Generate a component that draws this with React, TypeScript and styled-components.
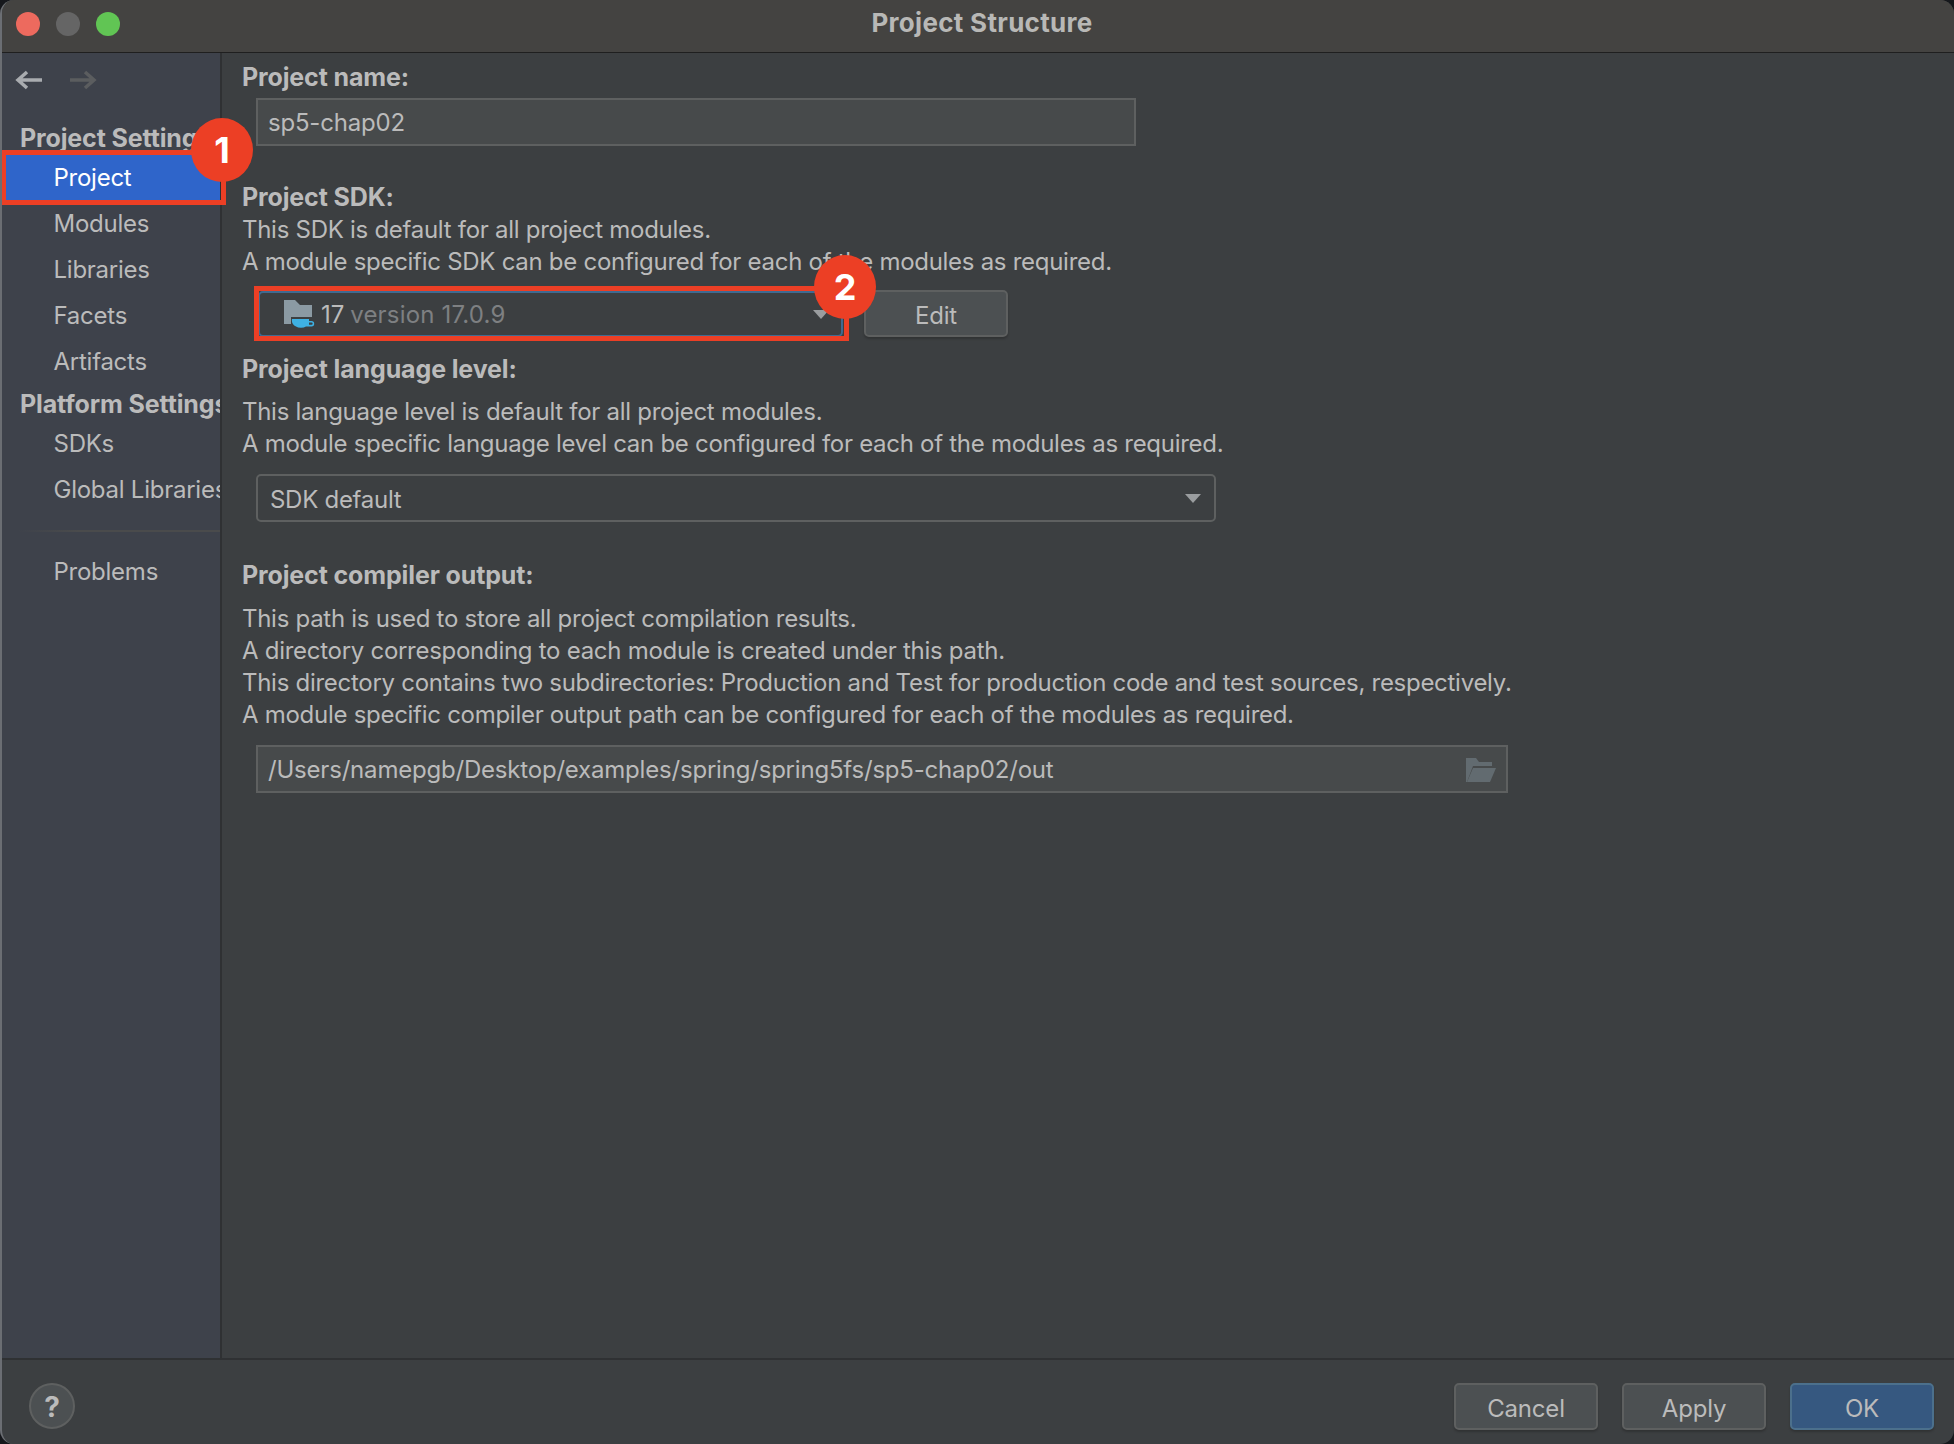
import React from "react";
import styled, { createGlobalStyle } from "styled-components";

const GlobalStyle = createGlobalStyle`
  html, body {
    margin: 0;
    padding: 0;
    background: #16181c;
  }
  body {
    font-family: Inter, "Liberation Sans", sans-serif;
    font-size: 24px;
    color: #bbbbbb;
  }
`;

const Window = styled.div`
  width: 1954px;
  height: 1444px;
  box-sizing: border-box;
  display: flex;
  flex-direction: column;
  background: #3c3f41;
  border-left: 2px solid #6b6e73;
  border-radius: 14px;
  overflow: hidden;
`;

const TitleBar = styled.div`
  position: relative;
  box-sizing: border-box;
  height: 53px;
  flex: none;
  display: flex;
  justify-content: center;
  padding-top: 7px;
  background: #444341;
  border-bottom: 1px solid #1f1f1f;
`;

const Lights = styled.div`
  position: absolute;
  left: 14px;
  top: 12px;
  display: flex;
  gap: 16px;
`;

const Light = styled.span<{ $color: string }>`
  width: 24px;
  height: 24px;
  border-radius: 50%;
  background: ${({ $color }) => $color};
`;

const Title = styled.div`
  font-size: 26px;
  line-height: 32px;
  font-weight: 700;
  color: #b8b8b6;
  letter-spacing: 0.3px;
  margin-left: 8px;
`;

const Main = styled.div`
  flex: 1;
  display: flex;
  min-height: 0;
`;

const Sidebar = styled.div`
  width: 218px;
  flex: none;
  display: flex;
  flex-direction: column;
  background: #3e424b;
  border-right: 2px solid #2f3133;
`;

const NavBar = styled.div`
  height: 54px;
  display: flex;
  align-items: center;
  gap: 26px;
  padding-left: 13px;
  margin-bottom: 14px;
`;

const SectionTitle = styled.div<{ $gap?: number }>`
  height: 32px;
  line-height: 34px;
  margin-top: ${({ $gap }) => $gap ?? 0}px;
  margin-bottom: 1px;
  padding-left: 18px;
  font-size: 25px;
  font-weight: 700;
  letter-spacing: -0.13px;
  white-space: nowrap;
  overflow: hidden;
`;

const NavItem = styled.div<{ $active?: boolean }>`
  position: relative;
  height: 46px;
  line-height: 48px;
  padding-left: 51.5px;
  letter-spacing: -0.25px;
  white-space: nowrap;
  color: ${({ $active }) => ($active ? "#ffffff" : "#bbbbbb")};
  background: ${({ $active }) => ($active ? "#2f65ca" : "transparent")};
`;

const ClippedLabel = styled.span`
  display: block;
  overflow: hidden;
`;

const SideRule = styled.div`
  height: 2px;
  margin: 18px 0 16px 16px;
  background: linear-gradient(90deg, #3e424b, #4a4b4c 30%, #4a4b4c);
`;

const Highlight = styled.div<{ $inset: string }>`
  position: absolute;
  inset: ${({ $inset }) => $inset};
  border: 5px solid #ec3f25;
  z-index: 2;
  pointer-events: none;
`;

const Badge = styled.div<{ $top: number; $left?: number; $right?: number }>`
  position: absolute;
  top: ${({ $top }) => $top}px;
  left: ${({ $left }) => ($left === undefined ? "auto" : `${$left}px`)};
  right: ${({ $right }) => ($right === undefined ? "auto" : `${$right}px`)};
  width: 62px;
  height: 64px;
  border-radius: 50%;
  background: #ec3f25;
  color: #ffffff;
  display: flex;
  align-items: center;
  justify-content: center;
  font-size: 36px;
  font-weight: 700;
  line-height: 1;
  z-index: 3;
`;

const Content = styled.div`
  flex: 1;
  padding: 8px 20px 0 20px;
  min-width: 0;
`;

const Label = styled.div<{ $gap?: number }>`
  height: 32px;
  line-height: 33px;
  margin-top: ${({ $gap }) => $gap ?? 0}px;
  font-size: 25px;
  font-weight: 700;
  letter-spacing: -0.13px;
`;

const Description = styled.div<{ $gap?: number }>`
  height: 32px;
  margin-top: ${({ $gap }) => $gap ?? 0}px;
  line-height: 34px;
  letter-spacing: -0.28px;
  white-space: nowrap;
`;

const TextField = styled.div<{ $width: number; $gap: number }>`
  box-sizing: border-box;
  width: ${({ $width }) => $width}px;
  height: 48px;
  margin: ${({ $gap }) => $gap}px 0 0 14px;
  padding: 1px 10px 0;
  display: flex;
  align-items: center;
  justify-content: space-between;
  background: #474a4b;
  border: 2px solid #5e6060;
  letter-spacing: -0.2px;
`;

const ComboRow = styled.div`
  display: flex;
  align-items: center;
  gap: 21px;
  height: 47px;
  margin: 13px 0 0 16px;
`;

const SdkCombo = styled.div`
  position: relative;
  box-sizing: border-box;
  width: 585px;
  height: 46px;
  display: flex;
  align-items: center;
  padding-left: 23px;
  border: 2px solid #3f6a91;
  border-radius: 5px;
`;

const SdkName = styled.span`
  margin-left: 6px;
  padding-top: 2px;
  letter-spacing: -0.1px;
`;

const SdkVersion = styled.span`
  margin-left: 6px;
  padding-top: 2px;
  color: #7e8082;
  letter-spacing: 0.2px;
`;

const Caret = styled.span<{ $right: number }>`
  position: absolute;
  right: ${({ $right }) => $right}px;
  top: 50%;
  margin-top: -4px;
  width: 0;
  height: 0;
  border-left: 8px solid transparent;
  border-right: 8px solid transparent;
  border-top: 9px solid #9a9d9f;
`;

const Button = styled.div<{ $primary?: boolean }>`
  box-sizing: border-box;
  width: 144px;
  height: 47px;
  padding-top: 3px;
  display: flex;
  align-items: center;
  justify-content: center;
  border-radius: 5px;
  letter-spacing: -0.2px;
  background: ${({ $primary }) => ($primary ? "#365880" : "#4c5052")};
  border: 2px solid ${({ $primary }) => ($primary ? "#4c708c" : "#5e6060")};
  box-shadow: 0 2px 2px rgba(30, 30, 30, 0.35);
`;

const LevelCombo = styled.div`
  position: relative;
  box-sizing: border-box;
  width: 960px;
  height: 48px;
  margin: 15px 0 0 14px;
  padding: 2px 0 0 12px;
  display: flex;
  align-items: center;
  border: 2px solid #5e6060;
  border-radius: 5px;
  letter-spacing: -0.28px;
`;

const Footer = styled.div`
  flex: none;
  box-sizing: content-box;
  display: flex;
  align-items: flex-start;
  justify-content: space-between;
  padding: 23px 20px 0 27px;
  height: 61px;
  border-top: 2px solid #2f3133;
`;

const HelpButton = styled.div`
  box-sizing: border-box;
  width: 46px;
  height: 46px;
  padding-top: 2px;
  display: flex;
  align-items: center;
  justify-content: center;
  border-radius: 50%;
  background: #4c5052;
  border: 2px solid #5e6060;
  font-size: 28px;
  font-weight: 700;
`;

const FooterActions = styled.div`
  display: flex;
  gap: 24px;
`;

const BackIcon = ({ muted }: { muted?: boolean }) => (
  <svg width="28" height="22" viewBox="0 0 28 22" fill="none">
    <path
      d={muted ? "M1 11H25M16 3l9 8-9 8" : "M27 11H3M12 3l-9 8 9 8"}
      stroke={muted ? "#5b5d5f" : "#a9acb0"}
      strokeWidth="3.500"
    />
  </svg>
);

const JdkFolderIcon = () => (
  <svg width="32" height="30" viewBox="0 0 32 30">
    <path d="M1 1h11l5 5h12v19H1z" fill="#8b9aa3" />
    <path d="M8 18h23v12H8z" fill="#3c3f41" />
    <path d="M9 20h17v2h2.500a2.700 2.700 0 0 1 0 5.400H23a6 2.800 0 0 1-10 0 7 7 0 0 1-4-7.400zM26 23.500v2.300h2.500a1.100 1.100 0 0 0 0-2.300z" fill="#3eb1e3" />
  </svg>
);

const OpenFolderIcon = () => (
  <svg width="30" height="24" viewBox="0 0 30 24">
    <path d="M0 0h10l3 4h13v4H7L1 24H0z" fill="#626b70" />
    <path d="M7 10h23l-6 14H1z" fill="#626b70" />
  </svg>
);

export default function App() {
  return (
    <>
      <GlobalStyle />
      <Window>
        <TitleBar>
          <Lights>
            <Light $color="#ed6a5e" />
            <Light $color="#656565" />
            <Light $color="#61c554" />
          </Lights>
          <Title>Project Structure</Title>
        </TitleBar>
        <Main>
          <Sidebar>
            <NavBar>
              <BackIcon />
              <BackIcon muted />
            </NavBar>
            <SectionTitle>Project Settings</SectionTitle>
            <NavItem $active>
              Project
              <Highlight $inset="-4px -6px -5px -1px" />
              <Badge $top={-36} $left={189}>1</Badge>
            </NavItem>
            <NavItem>Modules</NavItem>
            <NavItem>Libraries</NavItem>
            <NavItem>Facets</NavItem>
            <NavItem>Artifacts</NavItem>
            <SectionTitle $gap={3}>Platform Settings</SectionTitle>
            <NavItem>SDKs</NavItem>
            <NavItem><ClippedLabel>Global Libraries</ClippedLabel></NavItem>
            <SideRule />
            <NavItem>Problems</NavItem>
          </Sidebar>
          <Content>
            <Label>Project name:</Label>
            <TextField $width={880} $gap={5}>sp5-chap02</TextField>

            <Label $gap={35}>Project SDK:</Label>
            <Description>This SDK is default for all project modules.</Description>
            <Description>A module specific SDK can be configured for each of the modules as required.</Description>
            <ComboRow>
              <SdkCombo>
                <JdkFolderIcon />
                <SdkName>17</SdkName>
                <SdkVersion>version 17.0.9</SdkVersion>
                <Caret $right={12} />
                <Highlight $inset="-7px -8px -6px -6px" />
                <Badge $top={-38} $right={-35}>2</Badge>
              </SdkCombo>
              <Button>Edit</Button>
            </ComboRow>

            <Label $gap={16}>Project language level:</Label>
            <Description $gap={10}>This language level is default for all project modules.</Description>
            <Description>A module specific language level can be configured for each of the modules as required.</Description>
            <LevelCombo>
              SDK default
              <Caret $right={13} />
            </LevelCombo>

            <Label $gap={37}>Project compiler output:</Label>
            <Description $gap={11}>This path is used to store all project compilation results.</Description>
            <Description>A directory corresponding to each module is created under this path.</Description>
            <Description>This directory contains two subdirectories: Production and Test for production code and test sources, respectively.</Description>
            <Description>A module specific compiler output path can be configured for each of the modules as required.</Description>
            <TextField $width={1252} $gap={15}>
              /Users/namepgb/Desktop/examples/spring/spring5fs/sp5-chap02/out
              <OpenFolderIcon />
            </TextField>
          </Content>
        </Main>
        <Footer>
          <HelpButton>?</HelpButton>
          <FooterActions>
            <Button>Cancel</Button>
            <Button>Apply</Button>
            <Button $primary>OK</Button>
          </FooterActions>
        </Footer>
      </Window>
    </>
  );
}
